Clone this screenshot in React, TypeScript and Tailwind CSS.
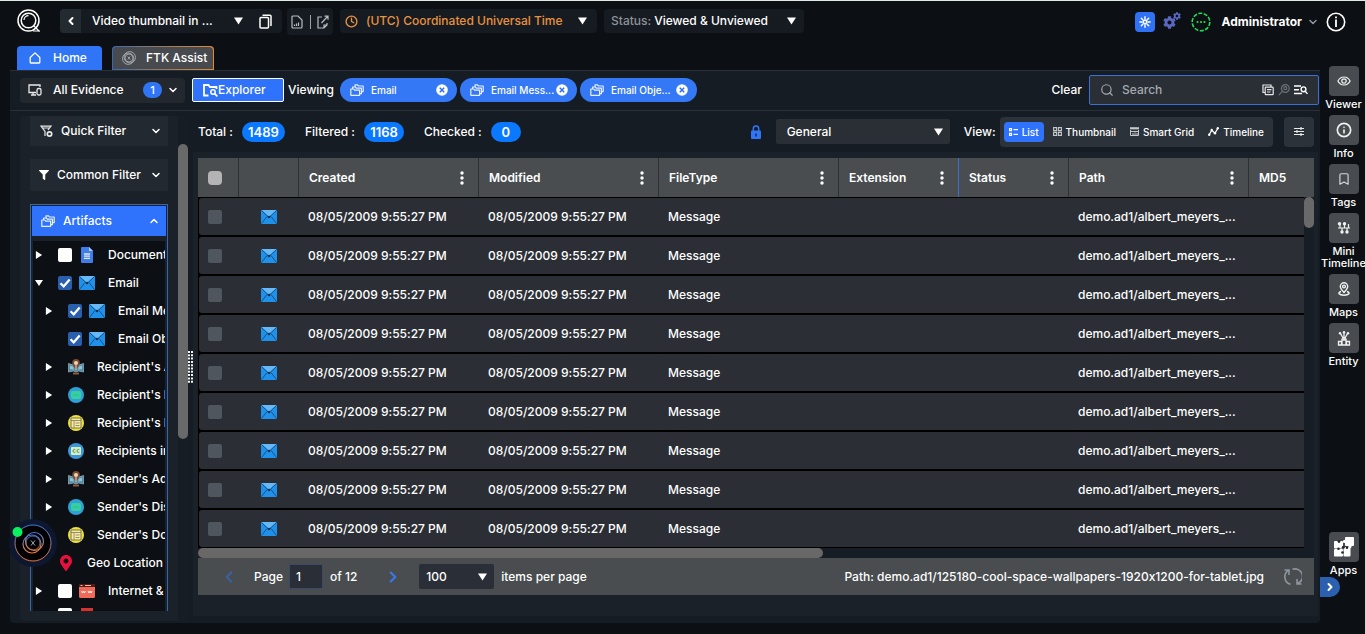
import React, { useState } from 'react';
import clsx from 'clsx';
import {
  Bookmark,
  ChevronDown,
  ChevronLeft,
  ChevronRight,
  ChevronUp,
  Clock,
  Info,
  Search,
} from 'lucide-react';
import { FaCog, FaFilter, FaMapMarkerAlt } from 'react-icons/fa';

type IconProps = { className?: string };

/* ---------- icons ---------- */

function Caret({ className }: IconProps) {
  return (
    <svg viewBox="0 0 9 8" className={clsx('h-[8px] w-[9px]', className)} fill="currentColor">
      <path d="M0 .5h9L4.500 7.500z" />
    </svg>
  );
}

function LogoIcon() {
  return (
    <svg viewBox="0 0 24 24" className="h-[24px] w-[24px]" fill="none" stroke="#fff">
      <circle cx="11.500" cy="11.500" r="10.500" strokeWidth="1.500" />
      <circle cx="11.500" cy="11.500" r="7.300" strokeWidth="1.500" />
      <path d="M7 11a4.500 4.500 0 0 1 4.500-4.300M16.500 16.500l6 6M16 22h7" strokeWidth="1.200" />
    </svg>
  );
}

function CopyIcon() {
  return (
    <svg viewBox="0 0 13 15" className="h-[15px] w-[13px]" fill="none" stroke="#fff" strokeWidth="1.500">
      <rect x="1" y="3.500" width="8.500" height="10.500" rx="1" />
      <path d="M3.500 1.200h7.500a1 1 0 0 1 1 1V12" />
    </svg>
  );
}

function ReportIcon() {
  return (
    <svg viewBox="0 0 12 14" className="h-[14px] w-[12px]" fill="none" stroke="#b9bdc1" strokeWidth="1.200">
      <path d="M1 2a1 1 0 0 1 1-1h5l4 4v7a1 1 0 0 1-1 1H2a1 1 0 0 1-1-1z" />
      <path d="M3.500 11V9.500M5.500 11V8.500M7.500 11V7.500" />
    </svg>
  );
}

function ExportIcon() {
  return (
    <svg viewBox="0 0 12 14" className="h-[14px] w-[12px]" fill="none" stroke="#b9bdc1" strokeWidth="1.200">
      <path d="M5 2H1v11h6l3-3V8M7 13v-3h3M4.500 8L10.500 1.500M7.500 1.200h3.500v3.500" />
    </svg>
  );
}

function SparkIcon() {
  return (
    <svg viewBox="0 0 12 12" className="h-[12px] w-[12px]" fill="none" stroke="#fff" strokeWidth="1.400" strokeLinecap="round">
      <path d="M6 .8v2.400M6 8.800v2.400M.8 6h2.400M8.800 6h2.400M2.300 2.300L4 4M8 8l1.700 1.700M9.700 2.300L8 4M4 8L2.300 9.700" />
      <circle cx="6" cy="6" r="1.700" />
    </svg>
  );
}

function BusyIcon() {
  return (
    <svg viewBox="0 0 20 20" className="h-[20px] w-[20px]" fill="none" stroke="#22dd55">
      <circle cx="10" cy="10" r="8.800" strokeWidth="1.600" strokeDasharray="4 1.500" />
      <g fill="#22dd55" stroke="none">
        <circle cx="6.500" cy="10" r="1.100" />
        <circle cx="10" cy="10" r="1.100" />
        <circle cx="13.500" cy="10" r="1.100" />
      </g>
    </svg>
  );
}

function InfoRingIcon() {
  return (
    <svg viewBox="0 0 20 20" className="h-[20px] w-[20px]" fill="none" stroke="#fff" strokeWidth="1.600">
      <circle cx="10" cy="10" r="8.700" />
      <path d="M10 7.500v7.500M10 4.500v1.800" strokeWidth="1.800" />
    </svg>
  );
}

function HomeIcon() {
  return (
    <svg viewBox="0 0 12 12" className="h-[12px] w-[12px]" fill="none" stroke="#fff" strokeWidth="1.300" strokeLinejoin="round">
      <path d="M1.200 5.500L6 .9l4.800 4.600v4.800a.7.700 0 0 1-.7.700H1.900a.7.700 0 0 1-.7-.7z" />
    </svg>
  );
}

function AssistIcon() {
  return (
    <svg viewBox="0 0 14 14" className="h-[14px] w-[14px]" fill="none" stroke="#c3c6c9" strokeWidth=".7">
      <circle cx="7.800" cy="6.300" r="5.700" />
      <circle cx="6.200" cy="7.700" r="5.700" />
      <circle cx="7" cy="7" r="4" />
      <path d="M5.800 5.500l2.400 3M8.200 5.500l-2.400 3" />
    </svg>
  );
}

function DevicesIcon() {
  return (
    <svg viewBox="0 0 14 12" className="h-[12px] w-[14px]" fill="none" stroke="#e8eaec" strokeWidth="1.300">
      <path d="M8 8.500H1V1h11v2M5 8.500v2M3 11h5" />
      <rect x="9" y="4.500" width="4" height="6.500" rx="1.500" />
    </svg>
  );
}

function FolderSearchIcon() {
  return (
    <svg viewBox="0 0 15 13" className="h-[13px] w-[15px]" fill="none" stroke="#fff" strokeWidth="1.800">
      <path d="M5.500 11.500H1V1h4.500L7 3h6.500v2" />
      <circle cx="10" cy="8" r="2.200" strokeWidth="1.500" />
      <path d="M11.700 9.700l2.600 2.600" />
    </svg>
  );
}

function FoldersIcon({ className }: IconProps) {
  return (
    <svg viewBox="0 0 14 12" className={clsx('h-[12px] w-[14px] shrink-0', className)} fill="none" stroke="#e6efff" strokeWidth="1.200" strokeLinejoin="round">
      <path d="M.8 5h3l.8 1.200h5V11.300H.8z" />
      <path d="M2.600 5V3h2.800l.8 1.200h5.200v5.500H9.600" />
      <path d="M5 3V.9h2.600l.8 1.100h4.800v5.600h-1.800" />
    </svg>
  );
}

function RemoveIcon() {
  return (
    <svg viewBox="0 0 12 12" className="h-[12px] w-[12px]">
      <circle cx="6" cy="6" r="5.800" fill="#fff" />
      <path d="M3.800 3.800l4.400 4.400M8.200 3.800L3.800 8.200" stroke="#2f6fe8" strokeWidth="1.500" />
    </svg>
  );
}

function FilterGearIcon() {
  return (
    <svg viewBox="0 0 13 13" className="h-[13px] w-[13px]" fill="none" stroke="#e8eaec" strokeWidth="1.200">
      <path d="M5 11V6.500L1 1.200h10L8 5M2 3h8" />
      <circle cx="9.500" cy="9" r="2.200" strokeWidth="1.700" />
    </svg>
  );
}

function LockIcon({ className }: IconProps) {
  return (
    <svg viewBox="0 0 10 14" className={clsx('h-[14px] w-[10px]', className)} fill="#3175f7">
      <path d="M2.300 6V3.700a2.700 2.700 0 0 1 5.400 0V6" fill="none" stroke="#3175f7" strokeWidth="1.500" />
      <rect y="5.500" width="10" height="8.500" rx="1" />
      <path d="M5 8.500v3" stroke="#142a55" strokeWidth="1.500" />
    </svg>
  );
}

function MailIcon() {
  return (
    <svg viewBox="0 0 16 14" className="h-[14px] w-[16px] shrink-0">
      <rect width="16" height="14" rx="1" fill="#2091ea" />
      <path d="M.5 0h15L8 7z" fill="#67b8f6" />
      <path d="M.5.500L8 7.500 15.500.500M.5 13.500L6 6.500M15.500 13.500L10 6.500" fill="none" stroke="#0f4474" strokeWidth=".8" />
      <circle cx="8" cy="7" r="1.300" fill="#0d3354" />
    </svg>
  );
}

function DocIcon() {
  return (
    <svg viewBox="0 0 12 16" className="h-[16px] w-[12px] shrink-0">
      <path d="M1 0h7l4 4v11a1 1 0 0 1-1 1H1a1 1 0 0 1-1-1V1a1 1 0 0 1 1-1z" fill="#3f7de8" />
      <path d="M8 0l4 4H8z" fill="#a9c7fb" />
      <path d="M3 7h6M3 9.200h6M3 11.400h6" stroke="#dfe9fd" strokeWidth="1.300" />
    </svg>
  );
}

function AddressIcon() {
  return (
    <svg viewBox="0 0 16 16" className="h-[16px] w-[16px] shrink-0">
      <path d="M.4 4.500L5.500 6 8 7l2.500-1 5.100-1.500V13l-5.100-1L8 13l-2.500-1-5.100 1z" fill="#4d8fa8" stroke="#b9c7cc" strokeWidth=".6" />
      <path d="M2 6.500l3.500 1.200v3L2 10zM14 6.500l-3.500 1.200v3L14 10z" fill="#8fc3d1" />
      <path d="M8 0a3.800 3.800 0 0 1 3.800 3.800C11.800 6.300 8 11 8 11S4.200 6.300 4.200 3.800A3.800 3.800 0 0 1 8 0z" fill="#7a4a34" />
      <circle cx="8" cy="4" r="2" fill="#edd5b8" />
      <path d="M8 6v5" stroke="#e9d9c6" />
      <path d="M5 13.500h6v2H5z" fill="#8b5a44" />
    </svg>
  );
}

function DisplayNameIcon() {
  return (
    <svg viewBox="0 0 16 16" className="h-[16px] w-[16px] shrink-0">
      <circle cx="8" cy="8" r="8" fill="#2f9fd6" />
      <rect x="3" y="4" width="10" height="8" rx="2" fill="#36cfa0" />
      <path d="M5 8h6" stroke="#2fbb93" />
    </svg>
  );
}

function DomainIcon() {
  return (
    <svg viewBox="0 0 16 16" className="h-[16px] w-[16px] shrink-0">
      <circle cx="8" cy="8" r="8" fill="#f0e23c" />
      <path d="M3 3h10v10H3z" fill="#f7eda0" stroke="#77705f" strokeWidth="1" />
      <path d="M3 5.500h10M6 5.500v7.500M7.500 8h4M7.500 10.500h4" stroke="#8c8460" strokeWidth=".9" />
    </svg>
  );
}

function CcIcon() {
  return (
    <svg viewBox="0 0 16 16" className="h-[16px] w-[16px] shrink-0">
      <circle cx="8" cy="8" r="8" fill="#3b98dc" />
      <rect x="3" y="4" width="10" height="8" rx="1" fill="#d9efbb" />
      <path d="M7.300 6.700a1.500 1.500 0 1 0 0 2.500M11.300 6.700a1.500 1.500 0 1 0 0 2.500" fill="none" stroke="#3d8b83" strokeWidth="1" />
    </svg>
  );
}

function InternetIcon() {
  return (
    <svg viewBox="0 0 16 14" className="h-[14px] w-[16px] shrink-0">
      <path d="M0 0h16v4H0z" fill="#4d1d18" />
      <path d="M1.500 1.500h2M6 1.500h6" stroke="#ffb3a6" />
      <path d="M0 3h16V12.500a1.500 1.500 0 0 1-1.500 1.500h-13A1.500 1.500 0 0 1 0 12.500z" fill="#ef6a58" />
      <path d="M2.500 7l1 2 1-2 1 2 1-2M9 7l1 2 1-2 1 2 1-2" fill="none" stroke="#fff" strokeWidth=".9" />
    </svg>
  );
}

function DuplicateIcon() {
  return (
    <svg viewBox="0 0 12 12" className="h-[12px] w-[12px]" fill="none" stroke="#e4e6e8" strokeWidth="1.200">
      <path d="M3 8.500H1V1h8v2" />
      <rect x="3.200" y="3.200" width="8" height="7.500" rx=".8" />
      <path d="M5 5.700h4.500M5 8h3.500" />
    </svg>
  );
}

function PersonSearchIcon() {
  return (
    <svg viewBox="0 0 12 12" className="h-[12px] w-[12px]" fill="none" stroke="#6c7176" strokeWidth="1.200">
      <circle cx="7.300" cy="4.500" r="3.900" />
      <circle cx="7.300" cy="4.200" r="1.500" />
      <path d="M4.300 7.400L.8 11.200" />
    </svg>
  );
}

function ListSearchIcon() {
  return (
    <svg viewBox="0 0 14 10" className="h-[10px] w-[14px]" fill="none" stroke="#fff" strokeWidth="1.400">
      <path d="M0 1h7M0 4.700h5M0 8.500h8" />
      <circle cx="9.500" cy="4.300" r="2.400" />
      <path d="M11.200 6.200l2.300 2.700" />
    </svg>
  );
}

function ListIcon() {
  return (
    <svg viewBox="0 0 9 8" className="h-[8px] w-[9px]" fill="none" stroke="#fff" strokeWidth="1.200">
      <path d="M.5.700h2v2h-2zM.5 5.300h2v2h-2zM4.500 1.700H9M4.500 6.300H9" />
    </svg>
  );
}

function ThumbIcon() {
  return (
    <svg viewBox="0 0 9 9" className="h-[9px] w-[9px]" fill="none" stroke="#c4c8cb" strokeWidth="1.100">
      <path d="M.6.600h3v3h-3zM5.400.600h3v3h-3zM.6 5.400h3v3h-3zM5.400 5.400h3v3h-3z" />
    </svg>
  );
}

function SmartGridIcon() {
  return (
    <svg viewBox="0 0 9 9" className="h-[9px] w-[9px]" fill="none" stroke="#c4c8cb" strokeWidth="1">
      <path d="M0 1.300h9" strokeWidth="2.200" />
      <path d="M.5 3v5.500h8V3M.5 4.500h8M3 6v2.500M5 5.500v3M7 6v2.500" />
    </svg>
  );
}

function TimelineIcon() {
  return (
    <svg viewBox="0 0 11 9" className="h-[9px] w-[11px]" fill="none" stroke="#fff" strokeWidth="1.300">
      <path d="M1.200 7.800l2.500-4.500 3.300 3L9.800 1.300" />
      <g fill="#fff" stroke="none">
        <circle cx="1.200" cy="7.800" r="1.200" />
        <circle cx="3.700" cy="3" r="1.200" />
        <circle cx="7" cy="6.300" r="1.200" />
        <circle cx="9.800" cy="1.200" r="1.200" />
      </g>
    </svg>
  );
}

function TuneIcon() {
  return (
    <svg viewBox="0 0 10 9" className="h-[9px] w-[10px]" fill="none" stroke="#e8eaec" strokeWidth="1.200">
      <path d="M0 1.500h10M0 4.500h10M0 7.500h10M7 0v3M3 3v3M7 6v3" />
    </svg>
  );
}

function KebabIcon() {
  return (
    <svg viewBox="0 0 4 14" className="h-[14px] w-[4px]" fill="#fff">
      <circle cx="2" cy="2" r="1.700" />
      <circle cx="2" cy="7" r="1.700" />
      <circle cx="2" cy="12" r="1.700" />
    </svg>
  );
}

function EyeIcon() {
  return (
    <svg viewBox="0 0 14 10" className="h-[10px] w-[14px]" fill="none" stroke="#f0f1f2" strokeWidth="1.200">
      <path d="M.9 5C2.200 2.500 4.400 1 7 1s4.800 1.500 6.100 4C11.800 7.500 9.600 9 7 9S2.200 7.500.9 5z" />
      <circle cx="7" cy="5" r="2.200" />
    </svg>
  );
}

function MiniTimelineIcon() {
  return (
    <svg viewBox="0 0 14 12" className="h-[12px] w-[14px]" fill="none" stroke="#f0f1f2" strokeWidth="1.200">
      <path d="M1 6h12M3 6V2M7.500 6V2M11.500 6V2M5 6v4M10 6v4" />
      <g fill="#f0f1f2" stroke="none">
        <circle cx="2.500" cy="1.800" r="1.700" />
        <circle cx="7.500" cy="1.800" r="1.700" />
        <circle cx="5" cy="10" r="1.700" />
        <circle cx="10" cy="10" r="1.700" />
      </g>
    </svg>
  );
}

function MapsIcon() {
  return (
    <svg viewBox="0 0 14 14" className="h-[14px] w-[14px]" fill="none" stroke="#f0f1f2" strokeWidth="1.400">
      <path d="M7 10.500C4.800 8 3.300 6.300 3.300 4.500a3.700 3.700 0 0 1 7.400 0C10.700 6.300 9.200 8 7 10.500z" />
      <circle cx="7" cy="4.500" r="1.400" />
      <path d="M4 9.500c-4 1.200-2 3.700 3 3.700s7-2.500 3-3.700" />
    </svg>
  );
}

function EntityIcon() {
  return (
    <svg viewBox="0 0 14 15" className="h-[15px] w-[14px]" fill="none" stroke="#f0f1f2" strokeWidth="1.300">
      <path d="M7 1v7M3.500 2.500L6 7M10.500 2.500L8 7M4.500 8h5" />
      <path d="M1.500 10.500h3v3.500h-3zM9.500 10.500h3v3.500h-3zM5 9h4v5H5z" />
      <g fill="#f0f1f2" stroke="none">
        <circle cx="7" cy="1.200" r="1.200" />
        <circle cx="3" cy="2.200" r="1.200" />
        <circle cx="11" cy="2.200" r="1.200" />
      </g>
    </svg>
  );
}

function PuzzleIcon() {
  return (
    <svg viewBox="0 0 20 20" className="h-[20px] w-[20px]">
      <g fill="#fff">
        <rect y="4" width="9" height="7.500" rx="1" />
        <rect y="12" width="9" height="7.500" rx="1" />
        <rect x="9.500" y="10" width="7" height="9.500" rx="1" />
        <path d="M11 1a1 1 0 0 1 1-1h7a1 1 0 0 1 1 1v7a1 1 0 0 1-1 1h-1.500a1.600 1.600 0 1 1-3 0H12a1 1 0 0 1-1-1V6a1.600 1.600 0 1 1 0-3z" />
      </g>
      <g fill="#25282b">
        <circle cx="5" cy="4.500" r="1.400" />
        <circle cx="4.500" cy="11.800" r="1.300" />
        <circle cx="8.500" cy="15.500" r="1.300" />
        <circle cx="9.300" cy="10.300" r="1.500" />
        <circle cx="13" cy="10.800" r="1.300" />
      </g>
    </svg>
  );
}

function RefreshIcon() {
  return (
    <svg viewBox="0 0 18 18" className="h-[18px] w-[18px]" fill="none" stroke="#8d949f" strokeWidth="1.600">
      <path d="M4.500 2.500A7.500 7.500 0 0 0 6.500 16.200M13.500 15.500A7.500 7.500 0 0 0 8.500 1.300M.5 2h4.500V7M17.500 16H13V11" />
    </svg>
  );
}

function Grip() {
  return (
    <svg viewBox="0 0 5 32" className="h-[32px] w-[5px]" fill="none" stroke="#f3f4f5" strokeWidth="2" strokeDasharray="2 1.300">
      <path d="M1 0v32M4 0v32" />
    </svg>
  );
}

/* ---------- shared controls ---------- */

interface PickerProps {
  label: string;
  value: string;
  className: string;
  caretClass?: string;
}

function Picker({ label, value, className, caretClass = 'right-[10px]' }: PickerProps) {
  return (
    <div className={clsx('relative flex items-center', className)}>
      <select aria-label={label} className="h-full w-full appearance-none bg-transparent pl-[11px] outline-none">
        <option>{value}</option>
      </select>
      <Caret className={clsx('pointer-events-none absolute', caretClass)} />
    </div>
  );
}

function TreeCheck({ name, defaultChecked }: { name: string; defaultChecked: boolean }) {
  return (
    <span className="relative flex shrink-0">
      <input
        type="checkbox"
        aria-label={name}
        defaultChecked={defaultChecked}
        className="peer h-[14px] w-[14px] appearance-none rounded-xs bg-white checked:bg-[#2a5fae]"
      />
      <svg
        viewBox="0 0 14 14"
        className="pointer-events-none absolute inset-0 hidden h-[14px] w-[14px] peer-checked:block"
        fill="none"
        stroke="#fff"
        strokeWidth="2.200"
      >
        <path d="M2.500 7.200l3.200 3.100 6-6.800" />
      </svg>
    </span>
  );
}

/* ---------- data ---------- */

interface TreeNode {
  label: string;
  level: 0 | 1;
  arrow?: 'open' | 'closed';
  checked?: boolean;
  icon: React.ReactNode;
}

const TREE: TreeNode[] = [
  { label: 'Documents', level: 0, arrow: 'closed', checked: false, icon: <DocIcon /> },
  { label: 'Email', level: 0, arrow: 'open', checked: true, icon: <MailIcon /> },
  { label: 'Email Messages', level: 1, arrow: 'closed', checked: true, icon: <MailIcon /> },
  { label: 'Email Objects', level: 1, checked: true, icon: <MailIcon /> },
  { label: "Recipient's Address", level: 1, arrow: 'closed', icon: <AddressIcon /> },
  { label: "Recipient's Display Name", level: 1, arrow: 'closed', icon: <DisplayNameIcon /> },
  { label: "Recipient's Domain", level: 1, arrow: 'closed', icon: <DomainIcon /> },
  { label: 'Recipients in CC', level: 1, arrow: 'closed', icon: <CcIcon /> },
  { label: "Sender's Address", level: 1, arrow: 'closed', icon: <AddressIcon /> },
  { label: "Sender's Display Name", level: 1, arrow: 'closed', icon: <DisplayNameIcon /> },
  { label: "Sender's Domain", level: 1, icon: <DomainIcon /> },
  { label: 'Geo Location', level: 0, icon: <FaMapMarkerAlt className="h-[16px] w-[16px] text-[#e8103c]" /> },
  { label: 'Internet & Chat', level: 0, arrow: 'closed', checked: false, icon: <InternetIcon /> },
];

const COLUMNS = [
  { name: 'Created', width: 'w-[180px]' },
  { name: 'Modified', width: 'w-[180px]' },
  { name: 'FileType', width: 'w-[180px]' },
  { name: 'Extension', width: 'w-[120px]' },
  { name: 'Status', width: 'w-[110px]' },
  { name: 'Path', width: 'w-[180px]' },
];

const ROWS = Array.from({ length: 9 }, (_, id) => ({
  id,
  created: '08/05/2009 9:55:27 PM',
  modified: '08/05/2009 9:55:27 PM',
  type: 'Message',
  path: 'demo.ad1/albert_meyers_...',
}));

const VIEWS = [
  { name: 'List', icon: <ListIcon /> },
  { name: 'Thumbnail', icon: <ThumbIcon /> },
  { name: 'Smart Grid', icon: <SmartGridIcon /> },
  { name: 'Timeline', icon: <TimelineIcon /> },
];

const RAIL = [
  { name: 'Viewer', icon: <EyeIcon /> },
  { name: 'Info', icon: <Info size={16} strokeWidth={2.5} className="text-[#f0f1f2]" /> },
  { name: 'Tags', icon: <Bookmark size={14} className="text-[#d5d8da]" /> },
  { name: 'Mini Timeline', icon: <MiniTimelineIcon /> },
  { name: 'Maps', icon: <MapsIcon /> },
  { name: 'Entity', icon: <EntityIcon /> },
];

/* ---------- sections ---------- */

function Header() {
  return (
    <header className="flex h-[46px] shrink-0 items-start border-t border-[#dfe9e6] pr-[19px] pl-[17px]">
      <div className="mt-[8px]">
        <LogoIcon />
      </div>
      <div className="mt-[8px] ml-[19px] flex h-[24px] w-[222px] items-center overflow-hidden rounded-sm bg-[#161b21]">
        <button aria-label="Back" className="flex h-full w-[21px] items-center justify-center bg-[#232a30]">
          <ChevronLeft size={12} strokeWidth={4} />
        </button>
        <Picker label="Case" value="Video thumbnail in ..." className="h-full w-[170px]" caretClass="right-[8px]" />
        <button aria-label="Copy" className="ml-[8px]"><CopyIcon /></button>
      </div>
      <div className="mt-[7px] ml-[5px] flex h-[27px] w-[46px] items-center justify-between rounded-sm bg-[#161b21] px-[4px]">
        <button aria-label="Report"><ReportIcon /></button>
        <span className="h-[14px] w-px bg-[#9ba0a4]" />
        <button aria-label="Export"><ExportIcon /></button>
      </div>
      <div className="mt-[8px] ml-[7px] flex h-[24px] w-[257px] items-center rounded-sm bg-[#161b21] pl-[5px] text-[#e8923f]">
        <Clock size={13} strokeWidth={2.5} className="shrink-0" />
        <div className="relative flex h-full flex-1 items-center">
          <select aria-label="Time zone" className="h-full w-full appearance-none bg-transparent pl-[8px] outline-none">
            <option>(UTC) Coordinated Universal Time</option>
          </select>
          <Caret className="pointer-events-none absolute right-[10px] text-white" />
        </div>
      </div>
      <label className="mt-[8px] ml-[7px] flex h-[24px] w-[200px] items-center rounded-sm bg-[#161b21] pl-[7px] text-[#8c9298]">
        Status:
        <span className="relative flex h-full flex-1 items-center text-white">
          <select className="h-full w-full appearance-none bg-transparent pl-[3px] outline-none">
            <option>Viewed &amp; Unviewed</option>
          </select>
          <Caret className="pointer-events-none absolute right-[8px]" />
        </span>
      </label>
      <div className="mt-[11px] ml-auto flex h-[20px] items-center">
        <button aria-label="Theme" className="flex h-[20px] w-[20px] items-center justify-center rounded-sm bg-[#2f72f6]">
          <SparkIcon />
        </button>
        <button aria-label="Settings" className="relative ml-[8px] h-[20px] w-[18px] text-[#5967c0]">
          <FaCog size={13} className="absolute bottom-[3px] left-0" />
          <FaCog size={8} className="absolute top-0 right-0" />
        </button>
        <span className="ml-[10px]"><BusyIcon /></span>
        <button className="ml-[10px] flex items-center gap-[5px] font-bold">
          Administrator
          <ChevronDown size={12} strokeWidth={3} className="text-[#8f96a3]" />
        </button>
        <button aria-label="About" className="ml-[7px]"><InfoRingIcon /></button>
      </div>
    </header>
  );
}

function Tabs() {
  return (
    <nav className="flex h-[24px] shrink-0 pl-[7px]">
      <button className="flex w-[85px] items-center gap-[12px] rounded-t-sm bg-[#3175f7] pl-[12px]">
        <HomeIcon />
        Home
      </button>
      <div className="ml-[10px] w-[102px] rounded-t-sm bg-linear-to-r from-[#3b66ae] via-[#9c7a5a] to-[#e08a32] p-px">
        <button className="flex h-full w-full items-center gap-[10px] rounded-t-sm bg-[#474b4f] pl-[9px]">
          <AssistIcon />
          <span className="whitespace-nowrap">FTK Assist</span>
        </button>
      </div>
    </nav>
  );
}

function Toolbar() {
  const [chips, setChips] = useState(['Email', 'Email Mess...', 'Email Obje...']);

  return (
    <div className="flex h-[40px] shrink-0 items-center border-b border-[#2a3037] pr-px pb-px pl-[10px]">
      <button className="flex h-[25px] w-[165px] items-center rounded-sm bg-[#23282e] pl-[8px]">
        <DevicesIcon />
        <span className="ml-[11px]">All Evidence</span>
        <span className="ml-auto flex h-[16px] w-[19px] items-center justify-center rounded-full bg-[#3175f7] text-[11px]">1</span>
        <ChevronDown size={12} strokeWidth={3} className="mr-[6px] ml-[5px]" />
      </button>
      <button className="ml-[7px] flex h-[24px] w-[92px] items-center rounded-xs border border-white bg-[#2f72fb] pl-[10px]">
        <FolderSearchIcon />
        Explorer
      </button>
      <span className="ml-[4px] w-[52px]">Viewing</span>
      <div className="flex gap-[3px]">
        {chips.map((chip) => (
          <span
            key={chip}
            className="flex h-[24px] w-[117px] items-center rounded-full bg-[#3478f6] pr-[9px] pl-[10px] text-[10px] whitespace-nowrap"
          >
            <FoldersIcon />
            <span className="ml-[7px]">{chip}</span>
            <button
              aria-label={`Remove ${chip}`}
              className="ml-auto"
              onClick={() => setChips((prev) => prev.filter((c) => c !== chip))}
            >
              <RemoveIcon />
            </button>
          </span>
        ))}
      </div>
      <button className="ml-auto" onClick={() => setChips([])}>Clear</button>
      <div className="ml-[7px] flex h-[30px] w-[230px] items-center rounded-xs border border-[#3d6fd4] bg-[#2a2f35] pr-[10px] pl-[10px]">
        <Search size={14} className="shrink-0 text-[#a4a9ad]" />
        <input
          type="search"
          aria-label="Search"
          placeholder="Search"
          className="ml-[8px] w-0 flex-1 bg-transparent outline-none placeholder:text-[#a4a9ad]"
        />
        <div className="flex shrink-0 items-center gap-[4px]">
          <button aria-label="Saved searches"><DuplicateIcon /></button>
          <button aria-label="Entity search"><PersonSearchIcon /></button>
          <button aria-label="Advanced search"><ListSearchIcon /></button>
        </div>
      </div>
    </div>
  );
}

function TreeRow({ node }: { node: TreeNode }) {
  return (
    <li className={clsx('flex h-[28px] items-center', node.level === 1 ? 'pl-[12px]' : 'pl-[2px]')}>
      <span className="flex w-[8px] shrink-0">
        {node.arrow && <Caret className={node.arrow === 'closed' ? '-rotate-90' : undefined} />}
      </span>
      <span className="ml-[15px] flex shrink-0 items-center">
        {node.checked !== undefined && (
          <span className="mr-[7px] flex">
            <TreeCheck name={node.label} defaultChecked={node.checked} />
          </span>
        )}
        <span className="flex w-[16px] justify-center">{node.icon}</span>
      </span>
      <span className="ml-[13px] whitespace-nowrap">{node.label}</span>
    </li>
  );
}

function FilterPanel() {
  return (
    <aside className="mt-[5px] mb-[2px] flex w-[168px] shrink-0 rounded-sm bg-[#1b2128]">
      <div className="flex min-h-0 w-[158px] flex-col px-[10px] pb-[10px]">
        <button className="flex h-[30px] shrink-0 items-center bg-[#222930] pr-[6px] pl-[10px]">
          <FilterGearIcon />
          <span className="ml-[8px]">Quick Filter</span>
          <ChevronDown size={12} strokeWidth={3} className="ml-auto" />
        </button>
        <button className="mt-[13px] flex h-[32px] shrink-0 items-center bg-[#222930] pr-[6px] pl-[9px]">
          <FaFilter size={10} />
          <span className="ml-[8px]">Common Filter</span>
          <ChevronDown size={12} strokeWidth={3} className="ml-auto" />
        </button>
        <div className="mt-[13px] flex min-h-0 flex-1 flex-col border border-b-0 border-[#3566ae] p-px pb-0">
          <button className="flex h-[30px] shrink-0 items-center bg-[#2f72fb] pr-[6px] pl-[9px]">
            <FoldersIcon />
            <span className="ml-[8px]">Artifacts</span>
            <ChevronUp size={12} strokeWidth={3} className="ml-auto" />
          </button>
          <ul className="mx-px mt-[5px] min-h-0 flex-1 overflow-hidden bg-[#0c0f13]">
            {TREE.map((node) => (
              <TreeRow key={node.label} node={node} />
            ))}
            <li className="flex h-[28px] items-start pt-[3px] pl-[25px]">
              <span className="mr-[7px] flex">
                <TreeCheck name="Mobile" defaultChecked={false} />
              </span>
              <span className="ml-[2px] h-[14px] w-[12px] bg-[#d8322f]" />
            </li>
          </ul>
        </div>
      </div>
      <div className="w-[10px] bg-[#171d24]">
        <div className="mt-[28px] h-[295px] rounded-full bg-[#696969]" />
      </div>
    </aside>
  );
}

function Counter({ label, value, className }: { label: string; value: string; className: string }) {
  return (
    <span className="flex items-center gap-[9px]">
      {label} :
      <span className={clsx('flex h-[20px] items-center justify-center rounded-full bg-[#0a78ff] text-[13px] font-semibold', className)}>
        {value}
      </span>
    </span>
  );
}

function StatsBar() {
  const [view, setView] = useState('List');

  return (
    <div className="flex h-[41px] shrink-0 items-center pr-[4px] pl-[5px]">
      <div className="flex gap-[20px]">
        <Counter label="Total" value="1489" className="w-[43px]" />
        <Counter label="Filtered" value="1168" className="w-[40px]" />
        <Counter label="Checked" value="0" className="w-[30px]" />
      </div>
      <LockIcon className="mr-[15px] ml-auto" />
      <Picker label="Column layout" value="General" className="h-[25px] w-[174px] rounded-xs bg-[#2a2f35]" caretClass="right-[7px]" />
      <span className="ml-[14px] w-[36px]">View:</span>
      <div className="flex h-[30px] items-center gap-[4px] rounded-sm bg-[#2b3239] px-[4px] text-[10px]">
        {VIEWS.map(({ name, icon }) => (
          <button
            key={name}
            onClick={() => setView(name)}
            className={clsx('flex h-[20px] items-center gap-[4px] rounded-sm px-[5px]', view === name && 'bg-[#2f72fb]')}
          >
            {icon}
            {name}
          </button>
        ))}
      </div>
      <button aria-label="Display options" className="ml-[11px] flex h-[30px] w-[30px] items-center justify-center rounded-sm bg-[#2b3239]">
        <TuneIcon />
      </button>
    </div>
  );
}

function DataGrid() {
  const td = 'border-y border-black bg-[#2b2f35] px-[9px]';

  return (
    <div className="relative min-h-0 flex-1 overflow-hidden">
      <table className="w-full table-fixed border-separate border-spacing-0 bg-black text-left whitespace-nowrap">
        <thead>
          <tr className="h-[39px] bg-[#494d50]">
            <th className="w-[41px] border-r border-[#2c3136] px-[10px]">
              <input type="checkbox" aria-label="Select all" className="block h-[14px] w-[14px] appearance-none rounded-sm bg-[#b4b4b4]" />
            </th>
            <th className="w-[60px] border-r border-[#2c3136]" />
            {COLUMNS.map(({ name, width }) => (
              <th
                key={name}
                className={clsx(
                  'border-r px-[10px] font-semibold',
                  width,
                  name === 'Extension' ? 'border-[#3b6fd0]' : 'border-[#2c3136]',
                )}
              >
                <span className="flex items-center justify-between">
                  {name}
                  <button aria-label={`${name} menu`} className="mr-[4px]"><KebabIcon /></button>
                </span>
              </th>
            ))}
            <th className="px-[10px] font-semibold">MD5</th>
          </tr>
        </thead>
        <tbody>
          {ROWS.map((row) => (
            <tr key={row.id} className="h-[39px]">
              <td className={clsx(td, 'rounded-l-sm border-l')}>
                <input type="checkbox" aria-label={`Select row ${row.id + 1}`} className="block h-[14px] w-[14px] appearance-none rounded-xs bg-[#50565d]" />
              </td>
              <td className={td}>
                <span className="flex justify-center"><MailIcon /></span>
              </td>
              <td className={td}>{row.created}</td>
              <td className={td}>{row.modified}</td>
              <td className={td}>{row.type}</td>
              <td className={td} />
              <td className={td} />
              <td className={td}>{row.path}</td>
              <td className={td} />
            </tr>
          ))}
        </tbody>
      </table>
      {/* vertical scrollbar, drawn over the last column */}
      <div className="absolute top-[39px] right-0 bottom-0 w-[10px] bg-[#171d24]">
        <div className="h-[31px] rounded-full bg-[#696969]" />
      </div>
    </div>
  );
}

function Pager() {
  return (
    <footer className="flex h-[37px] shrink-0 items-center bg-[#494d50] pr-[12px] pl-[22px]">
      <button aria-label="Previous page" className="text-[#3c5f9f]"><ChevronLeft size={18} strokeWidth={3} /></button>
      <label className="ml-[16px] flex items-center gap-[6px]">
        Page
        <input defaultValue="1" className="h-[25px] w-[34px] border border-[#3c4a66] bg-[#2a2e36] pl-[6px] outline-none" />
      </label>
      <span className="ml-[7px]">of 12</span>
      <button aria-label="Next page" className="ml-[27px] text-[#3b76e8]"><ChevronRight size={18} strokeWidth={3} /></button>
      <label className="ml-[17px] flex items-center gap-[7px]">
        <span className="relative flex h-[25px] w-[75px] items-center rounded-xs bg-[#2a2e36]">
          <select className="h-full w-full appearance-none bg-transparent pl-[7px] outline-none">
            <option>100</option>
          </select>
          <Caret className="pointer-events-none absolute right-[7px]" />
        </span>
        items per page
      </label>
      <span className="ml-auto">Path: demo.ad1/125180-cool-space-wallpapers-1920x1200-for-tablet.jpg</span>
      <button aria-label="Refresh" className="ml-[20px]"><RefreshIcon /></button>
    </footer>
  );
}

function RailButton({ name, icon }: { name: string; icon: React.ReactNode }) {
  return (
    <button className="flex w-full flex-col items-center pb-[5px] text-[11px]">
      <span className="flex h-[30px] w-[30px] items-center justify-center rounded-sm bg-[#484c50]">{icon}</span>
      <span className="pt-[2px] text-center leading-[12px]">{name}</span>
    </button>
  );
}

function AssistBubble() {
  return (
    <button aria-label="Open assistant" className="absolute bottom-[66px] left-[8px]">
      <svg viewBox="0 0 50 50" className="h-[50px] w-[50px]" fill="none">
        <defs>
          <linearGradient id="ring" x1="0" y1="0" x2="0" y2="1">
            <stop offset="0" stopColor="#4a7bd8" />
            <stop offset="1" stopColor="#e5793a" />
          </linearGradient>
        </defs>
        <circle cx="25" cy="25" r="24" fill="#0d1730" />
        <circle cx="25" cy="25" r="18" fill="#020204" stroke="url(#ring)" strokeWidth="1" />
        <circle cx="24" cy="26" r="9" stroke="url(#ring)" strokeWidth="1.200" />
        <circle cx="26.500" cy="23.500" r="9" stroke="url(#ring)" strokeWidth="1.200" />
        <circle cx="25" cy="25" r="7" stroke="url(#ring)" strokeWidth=".8" />
        <path d="M23 22.500l4 5M27 22.500l-4 5" stroke="#a9b4c8" strokeWidth=".9" />
        <circle cx="9.500" cy="14" r="5" fill="#0bf25f" />
      </svg>
    </button>
  );
}

export default function App() {
  return (
    <div className="relative flex h-screen flex-col overflow-hidden bg-[#0c0f13] font-['Inter',sans-serif] text-[12px] leading-[16px] font-medium text-white [font-feature-settings:'calt'_0]">
      <Header />
      <div className="flex min-h-0 flex-1">
        <div className="flex min-w-0 flex-1 flex-col pb-[11px] pl-[10px]">
          <Tabs />
          <main className="flex min-h-0 flex-1 flex-col rounded-b-sm border-t border-[#2a3037] bg-[#161c23]">
            <Toolbar />
            <div className="flex min-h-0 flex-1 pr-[2px] pl-[10px]">
              <FilterPanel />
              <div className="flex items-center"><Grip /></div>
              <section className="flex min-w-0 flex-1 flex-col pb-[7px]">
                <StatsBar />
                <div className="flex min-h-0 flex-1 flex-col bg-[#1b2129] pt-[6px] pr-[4px] pb-[21px] pl-[5px]">
                  <DataGrid />
                  <div className="h-[10px] shrink-0 bg-[#171d24]">
                    <div className="h-full w-[56%] rounded-full bg-[#6a6767]" />
                  </div>
                  <Pager />
                </div>
              </section>
            </div>
          </main>
        </div>
        <aside className="flex w-[45px] shrink-0 flex-col pt-[20px] pb-[37px]">
          <div className="pl-[2px]">
            {RAIL.map((item) => (
              <RailButton key={item.name} {...item} />
            ))}
          </div>
          <div className="mt-auto pl-[2px]">
            <RailButton name="Apps" icon={<PuzzleIcon />} />
          </div>
          <button aria-label="Expand panel" className="-mt-[4px] flex h-[20px] w-[20px] shrink-0 items-center justify-center rounded-r-full bg-[#2b60b0]">
            <ChevronRight size={12} strokeWidth={4} />
          </button>
        </aside>
      </div>
      <AssistBubble />
    </div>
  );
}
